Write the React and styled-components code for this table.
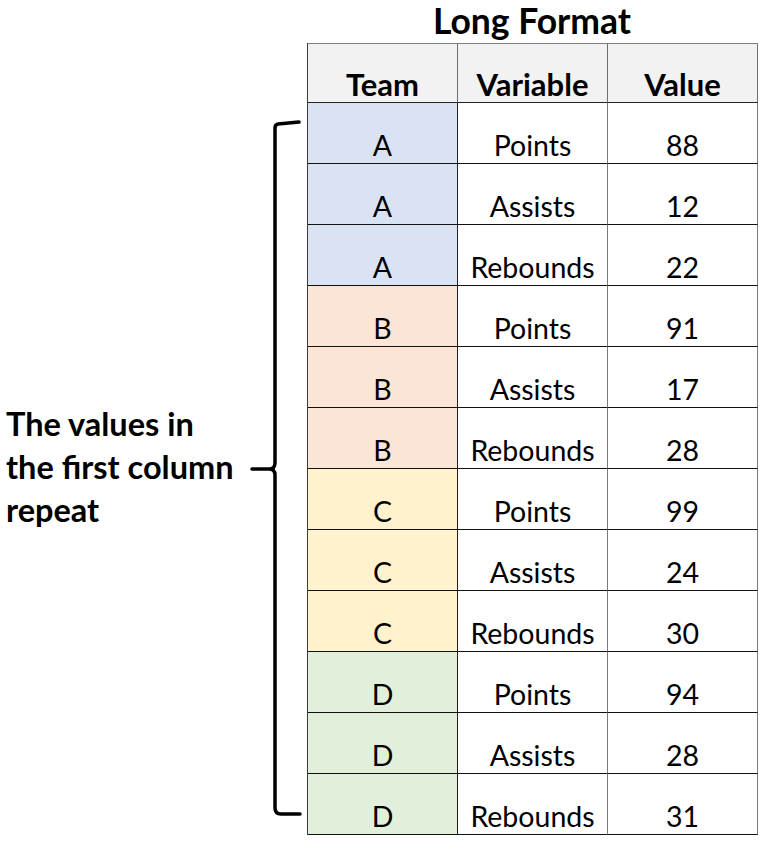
import React from "react";
import styled, { createGlobalStyle } from "styled-components";

const rows = [
  { team: "A", variable: "Points", value: 88 },
  { team: "A", variable: "Assists", value: 12 },
  { team: "A", variable: "Rebounds", value: 22 },
  { team: "B", variable: "Points", value: 91 },
  { team: "B", variable: "Assists", value: 17 },
  { team: "B", variable: "Rebounds", value: 28 },
  { team: "C", variable: "Points", value: 99 },
  { team: "C", variable: "Assists", value: 24 },
  { team: "C", variable: "Rebounds", value: 30 },
  { team: "D", variable: "Points", value: 94 },
  { team: "D", variable: "Assists", value: 28 },
  { team: "D", variable: "Rebounds", value: 31 },
];

const teamColors = {
  A: "#dae3f3",
  B: "#fbe5d6",
  C: "#fff2cc",
  D: "#e2efda",
};

const Brace = () => (
  <BraceSvg viewBox="0 0 57 704" width="57" height="704">
    <path
      d="M49,6 L28,8 Q25,8.5 25,12 L25,347 Q25,353 19,353 L2,353 M19,353 Q25,353 25,359 L25,692 Q25,698 31,698 L50,698"
      fill="none"
      stroke="#000"
      strokeWidth="3.5"
      strokeLinecap="round"
      strokeLinejoin="round"
    />
  </BraceSvg>
);

const App = () => {
  return (
    <>
      <GlobalStyle />
      <Page>
        <Side>
          <Label>
            The values in
            <br />
            the first column
            <br />
            repeat
          </Label>
          <Brace />
        </Side>
        <TableColumn>
          <Title>Long Format</Title>
          <Grid>
            <HeadCell>Team</HeadCell>
            <HeadCell>Variable</HeadCell>
            <HeadCell>Value</HeadCell>
            {rows.map((row, index) => (
              <React.Fragment key={index}>
                <TeamCell $bg={teamColors[row.team]}>{row.team}</TeamCell>
                <Cell>{row.variable}</Cell>
                <Cell>{row.value}</Cell>
              </React.Fragment>
            ))}
          </Grid>
        </TableColumn>
      </Page>
    </>
  );
};

const GlobalStyle = createGlobalStyle`
  * {
    box-sizing: border-box;
  }
  body {
    margin: 0;
    background: #ffffff;
    font-family: Lato, "Open Sans", sans-serif;
    color: #000;
  }
`;

const Page = styled.div`
  display: flex;
  width: 768px;
  height: 845px;
  background: #fff;
`;

const Side = styled.div`
  display: flex;
  width: 307px;
  height: 704px;
  margin-top: 116px;
`;

const Label = styled.div`
  width: 250px;
  display: flex;
  align-items: center;
  padding-left: 6px;
  padding-bottom: 4px;
  font-size: 32.5px;
  font-weight: 700;
  line-height: 43px;
  white-space: nowrap;
`;

const BraceSvg = styled.svg`
  display: block;
  flex-shrink: 0;
`;

const TableColumn = styled.div`
  display: flex;
  flex-direction: column;
  width: 450px;
`;

const Title = styled.div`
  height: 43px;
  font-size: 35.5px;
  font-weight: 700;
  line-height: 41px;
  text-align: center;
`;

const Grid = styled.div`
  display: grid;
  grid-template-columns: 150px 150px 150px;
  grid-auto-rows: 61px;
  grid-template-rows: 60px;
  border-left: 1px solid #3a3a3a;
`;

const Cell = styled.div`
  display: flex;
  align-items: flex-end;
  justify-content: center;
  padding-bottom: 4px;
  font-size: 28.5px;
  line-height: 1;
  background: ${(props) => props.$bg || "#fff"};
  border-bottom: 1px solid #111;
  border-right: 1px solid #7a7a7a;
`;

const TeamCell = styled(Cell)`
  border-right-color: #222;
`;

const HeadCell = styled.div`
  display: flex;
  align-items: flex-end;
  justify-content: center;
  padding-bottom: 2px;
  font-size: 31px;
  font-weight: 700;
  line-height: 1;
  background: #f2f2f2;
  border-top: 1px solid #7f7f7f;
  border-bottom: 1px solid #222;
  border-right: 1px solid #6f6f6f;
`;

export default App;
